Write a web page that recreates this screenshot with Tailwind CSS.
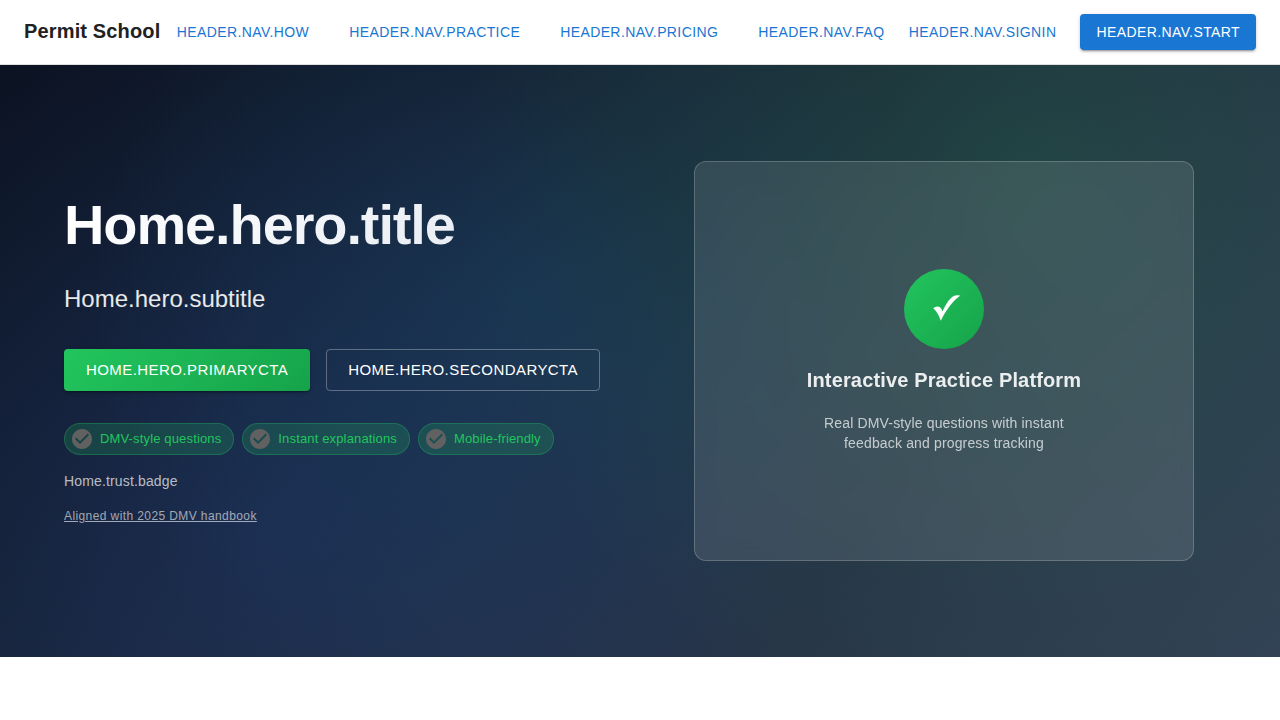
<!DOCTYPE html>
<html lang="en">
<head>
<meta charset="utf-8">
<title>Permit School</title>
<script src="https://cdn.jsdelivr.net/npm/@tailwindcss/browser@4"></script>
</head>
<body class="bg-white font-[Helvetica,'Liberation_Sans',Arial,sans-serif] text-[#212121] antialiased">
<header class="flex h-[65px] items-center justify-between border-b border-[#e0e0e0] bg-white px-6">
  <div class="pb-0.5 text-xl leading-8 font-semibold tracking-[0.15px] whitespace-nowrap">Permit School</div>
  <nav class="flex gap-6 text-sm leading-[24.5px] tracking-[0.4px] text-[#1976d2]">
    <a class="px-2 py-1.5">HEADER.NAV.HOW</a>
    <a class="px-2 py-1.5">HEADER.NAV.PRACTICE</a>
    <a class="px-2 py-1.5">HEADER.NAV.PRICING</a>
    <a class="px-2 py-1.5">HEADER.NAV.FAQ</a>
  </nav>
  <div class="flex items-center gap-4 text-sm leading-[24px] tracking-[0.4px]">
    <a class="px-2 py-1.5 text-[#1976d2]">HEADER.NAV.SIGNIN</a>
    <a class="rounded bg-[#1976d2] px-4 py-1.5 text-white shadow-[0_3px_1px_-2px_rgba(0,0,0,0.2),0_2px_2px_rgba(0,0,0,0.14),0_1px_5px_rgba(0,0,0,0.12)]">HEADER.NAV.START</a>
  </div>
</header>
<main class="h-[592px] bg-[radial-gradient(circle_at_20%_80%,rgba(37,99,235,0.15)_0%,transparent_50%),radial-gradient(circle_at_80%_20%,rgba(34,197,94,0.15)_0%,transparent_50%),radial-gradient(circle_at_40%_40%,rgba(14,165,233,0.1)_0%,transparent_50%),linear-gradient(135deg,#0b1220_0%,#1e293b_50%,#334155_100%)] px-16">
  <div class="flex h-full items-center">
    <section class="w-[544px] shrink-0 pb-1">
      <h1 class="w-[544px] bg-linear-135 from-white to-[#e2e8f0] bg-clip-text pt-px text-[56px] leading-[61.6px] font-bold tracking-[-1.12px] text-transparent">Home.hero.title</h1>
      <p class="mt-[25px] text-2xl leading-[38.4px] text-white/90">Home.hero.subtitle</p>
      <div class="mt-[30px] flex gap-4 text-[15px] leading-[26px] tracking-[0.43px] whitespace-nowrap text-white">
        <a class="rounded bg-linear-135 from-[#22c55e] to-[#16a34a] px-[22px] py-2 shadow-[0_3px_1px_-2px_rgba(0,0,0,0.2),0_2px_2px_rgba(0,0,0,0.14),0_1px_5px_rgba(0,0,0,0.12)]">HOME.HERO.PRIMARYCTA</a>
        <a class="rounded border border-white/30 px-[21px] py-[7px]">HOME.HERO.SECONDARYCTA</a>
      </div>
      <div class="mt-8 flex gap-2 text-[13px] tracking-[0.15px] whitespace-nowrap text-[#22c55e]">
        <span class="flex h-8 items-center rounded-full border border-[#22c55e]/30 bg-[#22c55e]/20 pr-3 pl-[5px]"><svg class="mr-1.5 size-6 text-[#616161]" viewBox="0 0 24 24" fill="currentColor"><path d="M12 2C6.48 2 2 6.48 2 12s4.48 10 10 10 10-4.48 10-10S17.52 2 12 2zm-2 15-5-5 1.41-1.41L10 14.17l7.59-7.59L19 8l-9 9z"/></svg>DMV-style questions</span>
        <span class="flex h-8 items-center rounded-full border border-[#22c55e]/30 bg-[#22c55e]/20 pr-3 pl-[5px]"><svg class="mr-1.5 size-6 text-[#616161]" viewBox="0 0 24 24" fill="currentColor"><path d="M12 2C6.48 2 2 6.48 2 12s4.48 10 10 10 10-4.48 10-10S17.52 2 12 2zm-2 15-5-5 1.41-1.41L10 14.17l7.59-7.59L19 8l-9 9z"/></svg>Instant explanations</span>
        <span class="flex h-8 items-center rounded-full border border-[#22c55e]/30 bg-[#22c55e]/20 pr-3 pl-[5px]"><svg class="mr-1.5 size-6 text-[#616161]" viewBox="0 0 24 24" fill="currentColor"><path d="M12 2C6.48 2 2 6.48 2 12s4.48 10 10 10 10-4.48 10-10S17.52 2 12 2zm-2 15-5-5 1.41-1.41L10 14.17l7.59-7.59L19 8l-9 9z"/></svg>Mobile-friendly</span>
      </div>
      <p class="mt-4 text-sm leading-5 tracking-[0.15px] text-white/70">Home.trust.badge</p>
      <p class="mt-[15px] text-xs leading-5 tracking-[0.4px] text-white/60 underline">Aligned with 2025 DMV handbook</p>
    </section>
    <section class="ml-[86px] flex h-[400px] w-[500px] shrink-0 flex-col items-center rounded-xl border border-white/20 bg-white/11 pt-[107px] text-center backdrop-blur-[10px]">
      <div class="flex size-20 items-center justify-center rounded-full bg-linear-135 from-[#22c55e] to-[#16a34a]"><svg class="size-20 text-white" viewBox="0 0 80 80" fill="currentColor"><path d="M29.3 39.3C32 36.6 37 36.2 38.5 42.5C42 35 47 26.3 52.5 26.3L56.4 26.6C49.5 31 42.5 40.5 36.8 51.8C35 46.6 32.8 42.5 29.3 39.3Z"/></svg></div>
      <h2 class="mt-[15px] text-xl leading-8 font-semibold tracking-[0.15px] text-white/90">Interactive Practice Platform</h2>
      <p class="mt-[17px] w-[280px] text-sm leading-5 tracking-[0.15px] text-white/70">Real DMV-style questions with instant feedback and progress tracking</p>
    </section>
  </div>
</main>
</body>
</html>
